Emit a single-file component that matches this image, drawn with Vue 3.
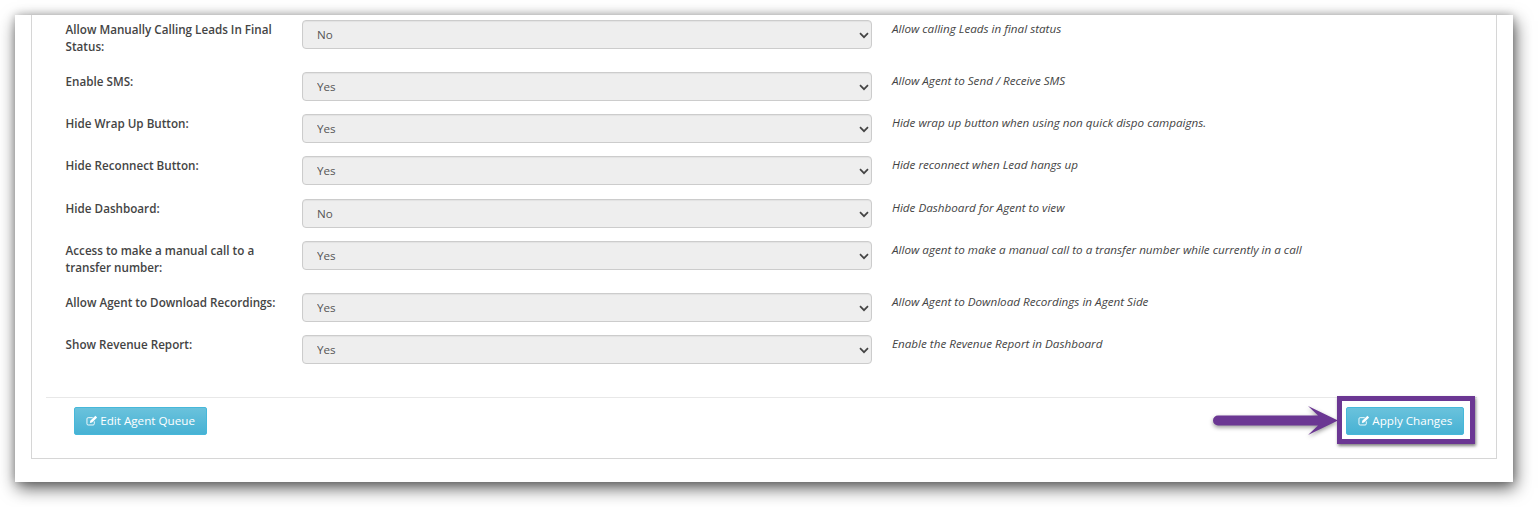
<script setup>
const rows = [
  { label: 'Allow Manually Calling Leads In Final Status:', value: 'No', help: 'Allow calling Leads in final status' },
  { label: 'Enable SMS:', value: 'Yes', help: 'Allow Agent to Send / Receive SMS' },
  { label: 'Hide Wrap Up Button:', value: 'Yes', help: 'Hide wrap up button when using non quick dispo campaigns.' },
  { label: 'Hide Reconnect Button:', value: 'Yes', help: 'Hide reconnect when Lead hangs up' },
  { label: 'Hide Dashboard:', value: 'No', help: 'Hide Dashboard for Agent to view' },
  { label: 'Access to make a manual call to a transfer number:', value: 'Yes', help: 'Allow agent to make a manual call to a transfer number while currently in a call' },
  { label: 'Allow Agent to Download Recordings:', value: 'Yes', help: 'Allow Agent to Download Recordings in Agent Side' },
  { label: 'Show Revenue Report:', value: 'Yes', help: 'Enable the Revenue Report in Dashboard' }
]
</script>

<template>
  <div class="page">
    <div class="window">
      <div class="box">
        <div class="form">
          <div v-for="row in rows" :key="row.label" class="row">
            <div class="label">{{ row.label }}</div>
            <div class="control">
              <select class="select" :value="row.value">
                <option>Yes</option>
                <option>No</option>
              </select>
              <svg class="chevron" width="10" height="7" viewBox="0 0 10 7">
                <path d="M1 1.2 5 5.2 9 1.2" fill="none" stroke="#444" stroke-width="1.7" />
              </svg>
            </div>
            <div class="help">{{ row.help }}</div>
          </div>
        </div>
        <div class="footer">
          <button class="btn" type="button">
            <svg class="pen" width="12" height="11" viewBox="0 0 13 12">
              <path d="M9 6.9V9.6a1.3 1.3 0 0 1-1.3 1.3H2.3A1.3 1.3 0 0 1 1 9.6V4.2a1.3 1.3 0 0 1 1.3-1.3h5" fill="none" stroke="currentColor" stroke-width="1" />
              <path d="M4.6 6.2 10.2.7l1.9 1.9-5.5 5.5-2.4.5z" fill="currentColor" />
            </svg>
            Edit Agent Queue
          </button>
          <div class="callout">
            <svg class="arrow" width="126" height="42" viewBox="0 0 126 42">
              <path d="M5 16.5H105L95 7l30 14.5L95 36l10-9.5H5a5 5 0 0 1 0-10z" fill="#6b3793" />
            </svg>
            <button class="btn" type="button">
              <svg class="pen" width="12" height="11" viewBox="0 0 13 12">
                <path d="M9 6.9V9.6a1.3 1.3 0 0 1-1.3 1.3H2.3A1.3 1.3 0 0 1 1 9.6V4.2a1.3 1.3 0 0 1 1.3-1.3h5" fill="none" stroke="currentColor" stroke-width="1" />
                <path d="M4.6 6.2 10.2.7l1.9 1.9-5.5 5.5-2.4.5z" fill="currentColor" />
              </svg>
              Apply Changes
            </button>
            <span class="frame"></span>
          </div>
        </div>
      </div>
    </div>
  </div>
</template>

<style>
html, body { margin: 0; background: #fff; }
</style>

<style scoped>
.page {
  width: 1538px;
  height: 507px;
  padding: 15px 25px 25px 15px;
  box-sizing: border-box;
  overflow: hidden;
  background: #fff;
}
.window {
  height: 467px;
  background: #fff;
  padding: 0 16px 23px;
  box-sizing: border-box;
  box-shadow: 2px 6px 16px rgba(0, 0, 0, 0.65), 0 0 8px rgba(0, 0, 0, 0.2);
  font-family: "Open Sans", "Noto Sans", sans-serif;
  font-size: 11.66px;
  color: #444;
}
.box {
  height: 100%;
  border: 1px solid #d6d6d6;
  border-top: 0;
  box-sizing: border-box;
  padding: 0 19px 0 14px;
}
.form {
  height: 382px;
  padding: 5.9px 0 0 19.6px;
  box-sizing: border-box;
}
.row {
  display: flex;
  align-items: flex-start;
  margin-bottom: 14.2px;
}
.label {
  width: 236.4px;
  padding: 0 14px 4px 0;
  box-sizing: border-box;
  font-weight: 600;
  line-height: 17px;
  color: #444;
}
.control {
  position: relative;
  width: 570px;
  height: 29px;
  flex: none;
  margin-top: -1px;
}
.select {
  appearance: none;
  display: block;
  width: 100%;
  height: 29px;
  padding: 0 14px;
  background: #eee;
  border: 1px solid #ccc;
  border-radius: 4px;
  box-shadow: inset 0 1px 1px rgba(0, 0, 0, 0.05);
  font: 11.66px "Open Sans", "Noto Sans", sans-serif;
  color: #555;
}
.chevron {
  position: absolute;
  right: 3px;
  top: 12px;
  pointer-events: none;
}
.help {
  margin: -1px 0 0 20px;
  font-style: italic;
  line-height: 17px;
  color: #444;
}
.footer {
  display: flex;
  justify-content: space-between;
  align-items: flex-start;
  border-top: 1px solid #e8e8e8;
  padding: 9px 13px 0 28px;
}
.btn {
  display: inline-flex;
  align-items: center;
  gap: 2.5px;
  height: 28px;
  padding: 0 10.7px 1px;
  border: 1px solid #46b8da;
  border-radius: 2px;
  background: linear-gradient(#6ac2dc, #47b2d4);
  color: #fff;
  font: 11.66px "Open Sans", "Noto Sans", sans-serif;
  white-space: nowrap;
}
.callout {
  position: relative;
}
.frame {
  position: absolute;
  left: -9px;
  right: -11px;
  top: -11px;
  bottom: -9px;
  border: 5px solid #6b3793;
  box-shadow: 1px 2px 3px rgba(0, 0, 0, 0.5);
}
.arrow {
  position: absolute;
  left: -133px;
  top: -8px;
  filter: drop-shadow(0 2px 2px rgba(0, 0, 0, 0.4));
}
</style>
